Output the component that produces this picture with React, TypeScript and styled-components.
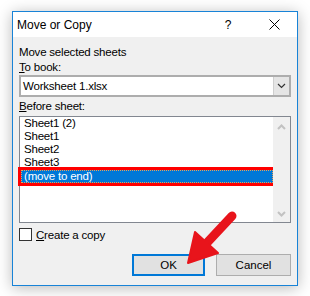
import React from 'react';
import styled, { createGlobalStyle } from 'styled-components';

const GlobalStyle = createGlobalStyle`
    html, body {
        margin: 0;
        padding: 0;
        background: #ffffff;
    }
    body {
        font-family: 'Liberation Sans', Arial, sans-serif;
    }
`;

const Page = styled.div`
    width: 310px;
    height: 296px;
    padding: 11px 12px 0 12px;
    box-sizing: border-box;
    position: relative;
    overflow: hidden;
`;

const Dialog = styled.div`
    width: 286px;
    height: 275px;
    box-sizing: border-box;
    border: 1px solid #1883d7;
    background: #f0f0f0;
    box-shadow: 0 2px 14px rgba(0, 0, 0, 0.28);
    display: flex;
    flex-direction: column;
    color: #000;
`;

const TitleBar = styled.div`
    height: 25px;
    background: #ffffff;
    display: flex;
    align-items: center;
    padding-left: 4px;
    font-size: 12px;
`;

const Title = styled.div`
    flex: 1;
`;

const TitleButton = styled.div`
    width: 46px;
    height: 25px;
    display: flex;
    align-items: center;
    justify-content: center;
    font-size: 12px;
`;

const Body = styled.div`
    flex: 1;
    display: flex;
    flex-direction: column;
    padding: 8px 6px 9px 6px;
`;

const Label = styled.div<{ $gap?: number }>`
    font-size: 11.5px;
    line-height: 15px;
    margin-top: ${(p) => p.$gap ?? 0}px;
    letter-spacing: -0.2px;
`;

const Key = styled.span`
    text-decoration: underline;
    text-underline-offset: 1px;
`;

const Combo = styled.div`
    height: 22px;
    box-sizing: border-box;
    border: 2px solid #adadad;
    background: #ffffff;
    display: flex;
    align-items: stretch;
`;

const ComboText = styled.div`
    flex: 1;
    font-size: 11.5px;
    letter-spacing: -0.2px;
    display: flex;
    align-items: center;
    padding-left: 2px;
`;

const ComboButton = styled.div`
    width: 15px;
    background: #e5e5e5;
    border-left: 1px solid #cfcfcf;
    display: flex;
    align-items: center;
    justify-content: center;
`;

const ListBox = styled.div`
    margin-top: 2px;
    height: 107px;
    box-sizing: border-box;
    border: 1px solid #828790;
    background: #ffffff;
    display: flex;
`;

const Items = styled.div`
    flex: 1;
    padding-left: 1px;
`;

const Item = styled.div<{ $selected?: boolean }>`
    height: 13px;
    line-height: 13px;
    font-size: 11.5px;
    letter-spacing: -0.2px;
    padding-left: 2px;
    box-sizing: border-box;
    background: ${(p) => (p.$selected ? '#0078d7' : 'transparent')};
    color: ${(p) => (p.$selected ? '#ffffff' : '#000000')};
    border: 1px dotted ${(p) => (p.$selected ? '#e8a05a' : 'transparent')};
    outline: ${(p) => (p.$selected ? '3px solid #ff0000' : 'none')};
    margin-top: ${(p) => (p.$selected ? 1 : 0)}px;
    display: flex;
    align-items: center;
`;

const ScrollBar = styled.div`
    width: 17px;
    background: #f0f0f0;
    display: flex;
    flex-direction: column;
    justify-content: space-between;
    align-items: center;
    padding: 7px 0 5px 0;
`;

const CheckRow = styled.div`
    margin-top: 5px;
    display: flex;
    align-items: center;
    gap: 4px;
    font-size: 11.5px;
    letter-spacing: -0.2px;
`;

const CheckBox = styled.div`
    width: 13px;
    height: 13px;
    box-sizing: border-box;
    border: 1px solid #333333;
    background: #ffffff;
`;

const Buttons = styled.div`
    margin-top: auto;
    display: flex;
    justify-content: flex-end;
    gap: 11px;
`;

const Button = styled.div<{ $primary?: boolean; $w: number }>`
    width: ${(p) => p.$w}px;
    height: 22px;
    box-sizing: border-box;
    border: ${(p) => (p.$primary ? '2px solid #0078d7' : '1px solid #adadad')};
    background: #e1e1e1;
    font-size: 11.5px;
    display: flex;
    align-items: center;
    justify-content: center;
`;

const Arrow = styled.svg`
    position: absolute;
    left: 0;
    top: 0;
    pointer-events: none;
`;

const Chevron = ({ up, color, weight }: { up?: boolean; color: string; weight: number }) => (
    <svg width="9" height="6" viewBox="0 0 9 6">
        <path d={up ? 'M1 5 L4.5 1.5 L8 5' : 'M1 1 L4.5 4.5 L8 1'} fill="none" stroke={color} strokeWidth={weight} />
    </svg>
);

const sheets = ['Sheet1 (2)', 'Sheet1', 'Sheet2', 'Sheet3', '(move to end)'];

const App = () => (
    <>
        <GlobalStyle />
        <Page>
            <Dialog>
                <TitleBar>
                    <Title>Move or Copy</Title>
                    <TitleButton>?</TitleButton>
                    <TitleButton>
                        <svg width="11" height="11" viewBox="0 0 11 11">
                            <path d="M0.5 0.5 L10.5 10.5 M10.5 0.5 L0.5 10.5" stroke="#000" strokeWidth="1" />
                        </svg>
                    </TitleButton>
                </TitleBar>
                <Body>
                    <Label>Move selected sheets</Label>
                    <Label>
                        <Key>T</Key>o book:
                    </Label>
                    <Combo>
                        <ComboText>Worksheet 1.xlsx</ComboText>
                        <ComboButton>
                            <Chevron color="#333" weight={1.2} />
                        </ComboButton>
                    </Combo>
                    <Label $gap={2}>
                        <Key>B</Key>efore sheet:
                    </Label>
                    <ListBox>
                        <Items>
                            {sheets.map((s, i) => (
                                <Item key={s} $selected={i === sheets.length - 1}>
                                    {s}
                                </Item>
                            ))}
                        </Items>
                        <ScrollBar>
                            <Chevron up color="#c2c2c2" weight={2} />
                            <Chevron color="#c2c2c2" weight={2} />
                        </ScrollBar>
                    </ListBox>
                    <CheckRow>
                        <CheckBox />
                        <span>
                            <Key>C</Key>reate a copy
                        </span>
                    </CheckRow>
                    <Buttons>
                        <Button $primary $w={73}>
                            OK
                        </Button>
                        <Button $w={75}>Cancel</Button>
                    </Buttons>
                </Body>
            </Dialog>
            <Arrow width="310" height="296" viewBox="0 0 310 296">
                <line x1="232" y1="216" x2="204" y2="246" stroke="#e8141b" strokeWidth="9" strokeLinecap="round" />
                <polygon
                    points="188,263 195,232 218,253"
                    fill="#e8141b"
                    stroke="#e8141b"
                    strokeWidth="2"
                    strokeLinejoin="round"
                />
            </Arrow>
        </Page>
    </>
);

export default App;
